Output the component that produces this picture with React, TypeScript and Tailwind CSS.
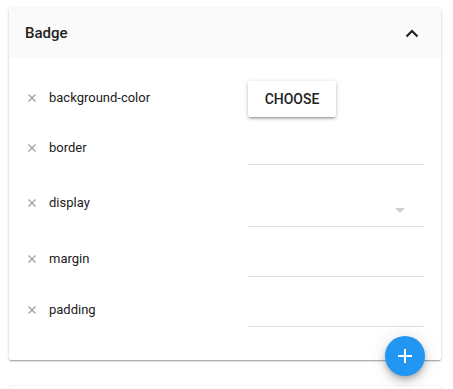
import React from 'react';

const font = { fontFamily: 'Roboto, "Liberation Sans", sans-serif' };

const CloseIcon = () => (
  <svg width="8" height="8" viewBox="0 0 8 8" className="shrink-0">
    <path d="M0.5 0.5 L7.5 7.5 M7.5 0.5 L0.5 7.5" stroke="#9e9e9e" strokeWidth="1.2" fill="none" />
  </svg>
);

const Label: React.FC<{ text: string }> = ({ text }) => (
  <div className="flex items-center h-5">
    <span className="w-[24px] pl-[3px] flex items-center">
      <CloseIcon />
    </span>
    <span className="text-[13px] leading-5 text-[#212121]">{text}</span>
  </div>
);

export default function App() {
  return (
    <div className="h-screen bg-white overflow-hidden" style={font}>
      <div className="ml-[9px] mt-[8px] w-[432px] relative bg-white rounded-[2px] shadow-[0_1px_3px_rgba(0,0,0,0.2),0_1px_1px_rgba(0,0,0,0.14),0_2px_1px_-1px_rgba(0,0,0,0.12)]">
        {/* Header */}
        <div className="h-[50px] bg-[#fafafa] flex items-center justify-between pl-4 pr-[22px]">
          <span className="text-[15px] font-medium text-[#212121] pt-px">Badge</span>
          <svg width="14" height="9" viewBox="0 0 14 9">
            <path d="M1.5 7.5 L7 2 L12.5 7.5" stroke="#212121" strokeWidth="2.2" fill="none" />
          </svg>
        </div>

        {/* Body */}
        <div className="pt-[23px] pb-[33px] pl-4 pr-[17px]">
          {/* background-color */}
          <div className="flex h-[50px]">
            <div className="w-[223px] pt-[7px]">
              <Label text="background-color" />
            </div>
            <div className="flex-1">
              <button className="h-9 w-[88px] bg-white rounded-[2px] text-[14px] font-medium text-[#212121] uppercase shadow-[0_1px_5px_rgba(0,0,0,0.2),0_2px_2px_rgba(0,0,0,0.14),0_3px_1px_-2px_rgba(0,0,0,0.12)]">
                Choose
              </button>
            </div>
          </div>

          {/* border */}
          <div className="flex h-[50px]">
            <div className="w-[223px] pt-[7px]">
              <Label text="border" />
            </div>
            <div className="flex-1">
              <div className="h-[34px] border-b border-[#e0e0e0]" />
            </div>
          </div>

          {/* display */}
          <div className="flex h-[56px]">
            <div className="w-[223px] pt-[12px]">
              <Label text="display" />
            </div>
            <div className="flex-1">
              <div className="h-[46px] border-b border-[#e0e0e0] flex justify-end items-end pb-[13px] pr-[19px]">
                <svg width="10" height="5" viewBox="0 0 10 5">
                  <path d="M0 0 L10 0 L5 5 Z" fill="#d0d0d0" />
                </svg>
              </div>
            </div>
          </div>

          {/* margin */}
          <div className="flex h-[50px]">
            <div className="w-[223px] pt-[12px]">
              <Label text="margin" />
            </div>
            <div className="flex-1">
              <div className="h-[40px] border-b border-[#e0e0e0]" />
            </div>
          </div>

          {/* padding */}
          <div className="flex h-[40px]">
            <div className="w-[223px] pt-[13px]">
              <Label text="padding" />
            </div>
            <div className="flex-1">
              <div className="h-[40px] border-b border-[#e0e0e0]" />
            </div>
          </div>
        </div>

        {/* FAB */}
        <button className="absolute right-[16px] bottom-[-16px] w-10 h-10 rounded-full bg-[#2196f3] flex items-center justify-center shadow-[0_3px_5px_-1px_rgba(0,0,0,0.2),0_6px_10px_0_rgba(0,0,0,0.14),0_1px_18px_0_rgba(0,0,0,0.12)]">
          <svg width="14" height="14" viewBox="0 0 14 14">
            <path d="M7 0 V14 M0 7 H14" stroke="#fff" strokeWidth="2" />
          </svg>
        </button>
      </div>

      {/* Next panel */}
      <div className="ml-[9px] mt-[26px] w-[432px] h-[60px] bg-white rounded-[2px] shadow-[0_1px_3px_rgba(0,0,0,0.2),0_1px_1px_rgba(0,0,0,0.14),0_2px_1px_-1px_rgba(0,0,0,0.12)]" />
    </div>
  );
}
